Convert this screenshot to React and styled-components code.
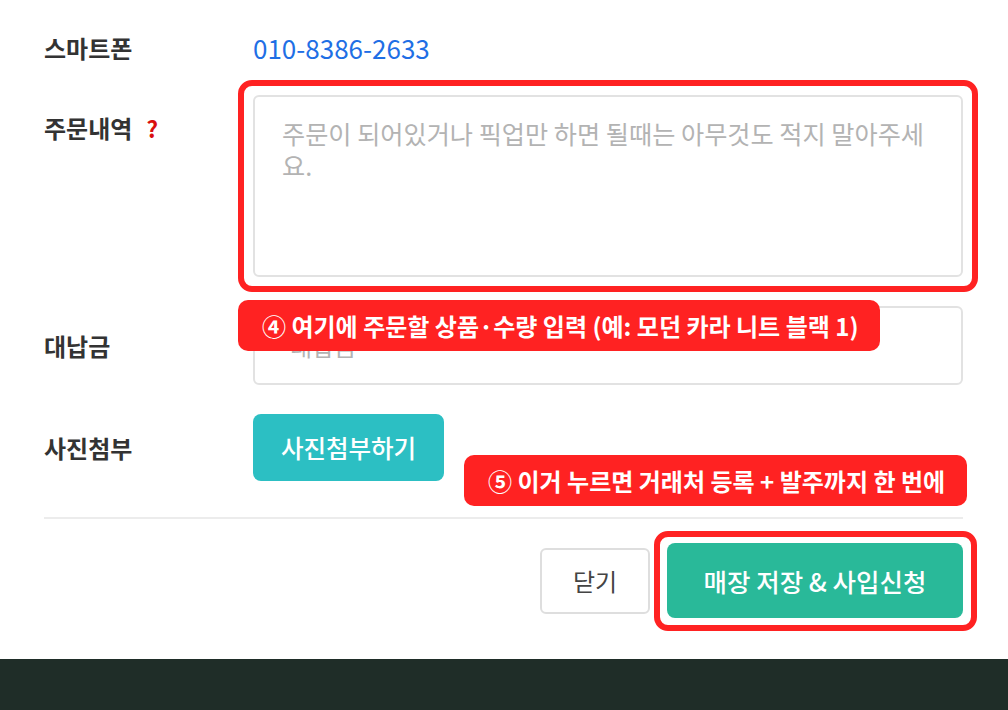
import React from "react";
import styled, { createGlobalStyle } from "styled-components";

const GlobalStyle = createGlobalStyle`
  html, body {
    margin: 0;
    padding: 0;
    background: #ffffff;
  }
  body {
    font-family: "Noto Sans CJK KR", "Noto Sans", sans-serif;
    color: #333;
  }
  * {
    box-sizing: border-box;
  }
`;

const Page = styled.div`
  display: flex;
  flex-direction: column;
  min-height: 710px;
`;

const Form = styled.div`
  padding: 30px 45px 41px 44px;
  display: flex;
  flex-direction: column;
  gap: 29px;
`;

const Row = styled.div`
  display: grid;
  grid-template-columns: 209px 1fr;
  align-items: ${(p) => (p.$top ? "start" : "center")};
`;

const Label = styled.div`
  font-size: 24px;
  font-weight: 700;
  color: #333;
  line-height: 32px;
  padding-top: ${(p) => p.$pad || 0}px;
  display: flex;
  align-items: center;
  gap: 14px;
`;

const Help = styled.span`
  color: #d90f0f;
  font-size: 23px;
  font-weight: 700;
`;

const Field = styled.div`
  position: relative;
`;

const Phone = styled.div`
  font-size: 26px;
  color: #1f6fe5;
  line-height: 36px;
`;

// red annotation ring drawn around a control
const Highlight = styled.div`
  position: relative;

  &::after {
    content: "";
    position: absolute;
    inset: ${(p) => p.$inset || "-15px"};
    border: 6px solid #ff2222;
    border-radius: 14px;
    pointer-events: none;
  }
`;

const TextArea = styled.textarea`
  display: block;
  width: 100%;
  height: 182px;
  padding: 20px 27px;
  border: 2px solid #e2e2e2;
  border-radius: 6px;
  font-family: inherit;
  font-size: 25.2px;
  line-height: 32px;
  color: #333;
  resize: none;
  outline: none;

  &::placeholder {
    color: #b3b3b3;
  }
`;

const Input = styled.input`
  display: block;
  width: 100%;
  height: 79px;
  padding: 0 35px;
  border: 2px solid #e2e2e2;
  border-radius: 6px;
  font-family: inherit;
  font-size: 24px;
  color: #333;
  outline: none;

  &::placeholder {
    color: #b3b3b3;
  }
`;

const AttachButton = styled.button`
  width: 191px;
  height: 67px;
  border: none;
  border-radius: 8px;
  background: #2cbfc3;
  color: #fff;
  font-family: inherit;
  font-size: 24.5px;
  font-weight: 500;
  cursor: pointer;
`;

const Callout = styled.div`
  position: absolute;
  left: ${(p) => p.$left}px;
  top: ${(p) => p.$top}px;
  height: 51px;
  padding: 0 22px 0 24px;
  display: flex;
  align-items: center;
  background: #ff2222;
  color: #fff;
  border-radius: 10px;
  font-size: 24px;
  font-weight: 700;
  white-space: nowrap;
  z-index: 2;
`;

const Divider = styled.div`
  height: 2px;
  background: #ececec;
  margin-top: 7px;
`;

const Actions = styled.div`
  display: flex;
  justify-content: flex-end;
  align-items: center;
  gap: 17px;
  margin-top: -5px;
`;

const CloseButton = styled.button`
  width: 110px;
  height: 66px;
  border: 2px solid #dedede;
  border-radius: 6px;
  background: #fff;
  color: #444;
  font-family: inherit;
  font-size: 24px;
  cursor: pointer;
`;

const SaveButton = styled.button`
  display: block;
  width: 296px;
  height: 75px;
  border: none;
  border-radius: 8px;
  background: #29b999;
  color: #fff;
  font-family: inherit;
  font-size: 25.5px;
  font-weight: 500;
  cursor: pointer;
`;

const Footer = styled.footer`
  flex: 1;
  min-height: 51px;
  background: #1f2d28;
`;

export default function App() {
  return (
    <Page>
      <GlobalStyle />
      <Form>
        <Row>
          <Label>스마트폰</Label>
          <Phone>010-8386-2633</Phone>
        </Row>

        <Row $top>
          <Label $pad={17}>
            주문내역 <Help>?</Help>
          </Label>
          <Highlight>
            <TextArea placeholder="주문이 되어있거나 픽업만 하면 될때는 아무것도 적지 말아주세요." />
          </Highlight>
        </Row>

        <Row>
          <Label>대납금</Label>
          <Field>
            <Input placeholder="대납금" />
            <Callout $left={-15} $top={-6}>
              ④ 여기에 주문할 상품·수량 입력 (예: 모던 카라 니트 블랙 1)
            </Callout>
          </Field>
        </Row>

        <Row>
          <Label>사진첨부</Label>
          <Field>
            <AttachButton>사진첨부하기</AttachButton>
            <Callout $left={211} $top={41}>
              ⑤ 이거 누르면 거래처 등록 + 발주까지 한 번에
            </Callout>
          </Field>
        </Row>

        <Divider />

        <Actions>
          <CloseButton>닫기</CloseButton>
          <Highlight $inset="-12px -14px -13px -13px">
            <SaveButton>매장 저장 &amp; 사입신청</SaveButton>
          </Highlight>
        </Actions>
      </Form>
      <Footer />
    </Page>
  );
}
